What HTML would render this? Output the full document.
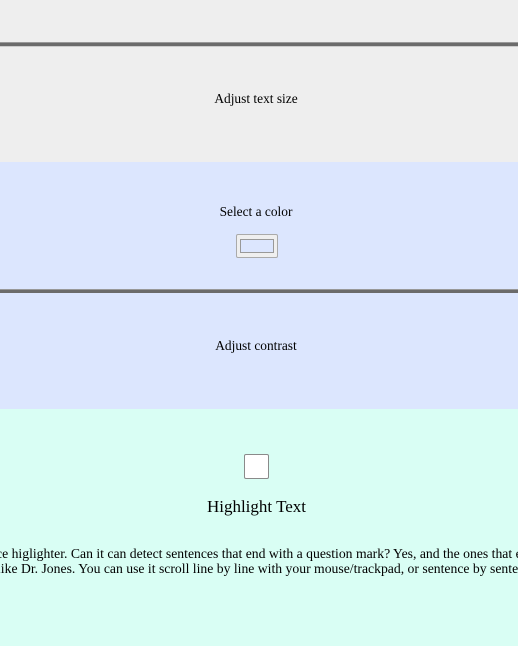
<!DOCTYPE html>
<html><head><style>
body{margin:0;width:518px;height:646px;overflow:hidden;position:relative;font-family:"Liberation Serif",serif;font-size:13.4px;color:#000}
.a{position:absolute;left:0;width:518px}
.t{position:absolute;left:0;width:512px;text-align:center;white-space:nowrap;line-height:15px}
.w{position:absolute;left:0;top:540px;width:518px;height:40px;overflow:hidden}
</style></head><body>
<div class="a" style="top:0;height:162px;background:#eeeeee"></div>
<div class="a" style="top:42px;height:1px;background:#999"></div>
<div class="a" style="top:43px;height:3px;background:#6b6b6b"></div>
<div class="a" style="top:46px;height:1px;background:#ccc"></div>
<div class="a" style="top:162px;height:247px;background:#dce6fe"></div>
<div class="a" style="top:289px;height:1px;background:#999"></div>
<div class="a" style="top:290px;height:3px;background:#6b6b6b"></div>
<div class="a" style="top:409px;height:237px;background:#d9fef4"></div>
<div class="t" style="top:91px">Adjust text size</div>
<div class="t" style="top:204px">Select a color</div>
<div style="position:absolute;left:236px;top:234px;width:40px;height:22px;border:1px solid #aaa;background:#efefef;border-radius:2px"></div>
<div style="position:absolute;left:240px;top:239px;width:32px;height:12px;border:1px solid #999;background:#dce6fe"></div>
<div class="t" style="top:338px">Adjust contrast</div>
<div style="position:absolute;left:244px;top:454px;width:23px;height:23px;border:1px solid #8a8a8a;background:#fff;border-radius:2px"></div>
<div class="t" style="top:497px;font-size:17px;line-height:20px;width:513px">Highlight Text</div>
<div class="w">
<div style="position:absolute;left:-4px;top:6px;white-space:nowrap;line-height:15px;font-size:13.7px">ce higlighter. Can it can detect sentences that end with a question mark? Yes, and the ones that end</div>
<div style="position:absolute;left:-3px;top:21px;white-space:nowrap;line-height:15px;font-size:13.7px">like Dr. Jones. You can use it scroll line by line with your mouse/trackpad, or sentence by sentence</div>
</div>
</body></html>
